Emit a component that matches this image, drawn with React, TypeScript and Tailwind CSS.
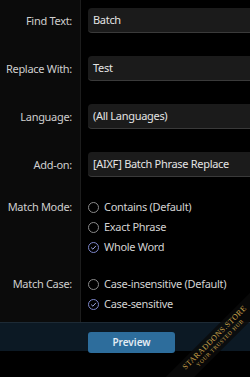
import React from 'react';

const font = { fontFamily: '"Noto Sans", "Open Sans", sans-serif' };

function Radio({ label, checked }: { label: string; checked?: boolean }) {
  return (
    <div className="flex h-[20px] items-center gap-[5px]">
      {checked ? (
        <svg width="11" height="11" viewBox="0 0 11 11" className="shrink-0">
          <circle cx="5.5" cy="5.5" r="5" fill="none" stroke="#7d86c9" strokeWidth="1" />
          <path d="M3.2 5.6 L4.9 7.2 L7.9 3.9" fill="none" stroke="#9aa3e0" strokeWidth="1" />
        </svg>
      ) : (
        <svg width="11" height="11" viewBox="0 0 11 11" className="shrink-0">
          <circle cx="5.5" cy="5.5" r="5" fill="none" stroke="#8a8a8a" strokeWidth="1" />
        </svg>
      )}
      <span className="text-[11px] tracking-[-0.3px] text-[#d2d2d2] whitespace-nowrap">{label}</span>
    </div>
  );
}

function TextRow({ label, value }: { label: string; value: string }) {
  return (
    <div className="flex h-[48px]">
      <div className="w-[81px] shrink-0 bg-[#0b0b0b] border-r border-[#1c1c1c] pt-[8px] pr-[8px] text-right">
        <div className="h-[25px] leading-[25px] text-[11px] tracking-[-0.3px] text-[#cfcfcf] whitespace-nowrap">{label}</div>
      </div>
      <div className="pl-[7px] pt-[8px]">
        <div className="w-[190px] h-[25px] rounded-[4px] bg-[#1b1b1b] border-b border-[#3a3a3a] pl-[5px] text-[11px] tracking-[-0.3px] leading-[24px] text-[#e4e4e4] whitespace-nowrap">
          {value}
        </div>
      </div>
    </div>
  );
}

function RadioGroup({ label, options, checked, pt, pb }: { label: string; options: string[]; checked: number; pt: string; pb: string }) {
  return (
    <div className="flex">
      <div className={`w-[81px] shrink-0 bg-[#0b0b0b] border-r border-[#1c1c1c] pr-[8px] text-right ${pt} ${pb}`}>
        <div className="h-[20px] leading-[20px] text-[11px] tracking-[-0.3px] text-[#cfcfcf] whitespace-nowrap">{label}</div>
      </div>
      <div className={`pl-[7px] ${pt} ${pb}`}>
        {options.map((o, i) => (
          <Radio key={o} label={o} checked={i === checked} />
        ))}
      </div>
    </div>
  );
}

export default function App() {
  return (
    <div className="relative w-[250px] h-[377px] overflow-hidden bg-black" style={font}>
      <TextRow label="Find Text:" value="Batch" />
      <TextRow label="Replace With:" value="Test" />
      <TextRow label="Language:" value="(All Languages)" />
      <TextRow label="Add-on:" value="[AIXF] Batch Phrase Replace" />
      <RadioGroup
        label="Match Mode:"
        options={['Contains (Default)', 'Exact Phrase', 'Whole Word']}
        checked={2}
        pt="pt-[5px]"
        pb="pb-[17px]"
      />
      <RadioGroup
        label="Match Case:"
        options={['Case-insensitive (Default)', 'Case-sensitive']}
        checked={1}
        pt="pt-0"
        pb="pb-[8px]"
      />

      {/* Footer */}
      <div className="h-[29px] bg-[#0c1924] border-t border-[#1d2a35] pl-[88px] pt-[5px]">
        <button className="w-[87px] h-[21px] rounded-[3px] bg-[#2d6d9c] text-[10px] font-semibold text-[#e2ecf4]">
          Preview
        </button>
      </div>

      {/* Watermark */}
      <div className="absolute left-[152px] top-[330px] w-[130px] -rotate-45 bg-[#0a0a0a]/80 text-center py-[2px]">
        <div className="text-[8px] leading-[9px] tracking-[0.4px] text-[#c9a24a]" style={{ fontFamily: '"Liberation Serif", serif' }}>
          STARADDONS.STORE
        </div>
        <div className="text-[5.5px] leading-[7px] tracking-[0.6px] text-[#c9a24a]" style={{ fontFamily: '"Liberation Serif", serif' }}>
          YOUR TRUSTED HUB
        </div>
      </div>
    </div>
  );
}
